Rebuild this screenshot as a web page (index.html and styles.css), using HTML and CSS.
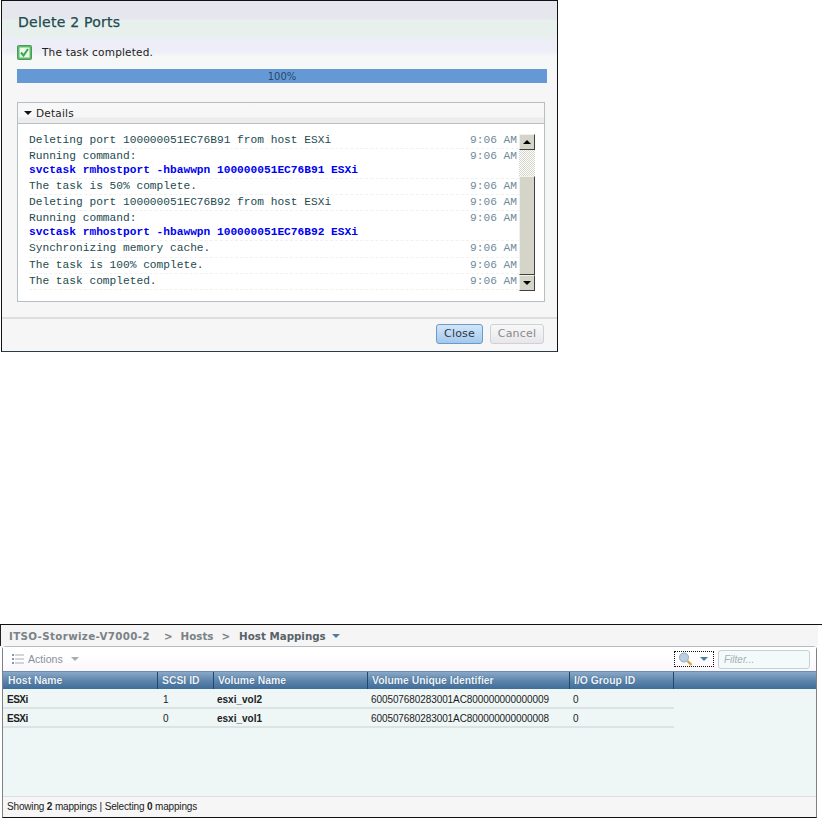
FILE: index.html
```html
<!DOCTYPE html>
<html lang="en">
<head>
<meta charset="utf-8">
<title>Delete 2 Ports</title>
<link rel="stylesheet" href="styles.css">
</head>
<body>
<section class="dialog">
  <h1 class="dialog-title">Delete 2 Ports</h1>
  <div class="status">
    <svg class="check" viewBox="0 0 15 15" width="15" height="15"><rect x=".5" y=".5" width="14" height="14" rx="1" fill="#5cbc68" stroke="#4a9a58"/><rect x="2.5" y="2.5" width="10" height="10" fill="#eef9ee"/><path d="M4 7.5l2.5 3L11 4" fill="none" stroke="#38ac48" stroke-width="2"/></svg>
    <span>The task completed.</span>
  </div>
  <div class="progress">100%</div>
  <div class="details">
    <div class="details-head"><span class="caret"></span>Details</div>
    <div class="details-body">
      <div class="log">
        <div class="row"><span>Deleting port 100000051EC76B91 from host ESXi</span><time>9:06 AM</time></div>
        <div class="row"><span>Running command:<b>svctask rmhostport -hbawwpn 100000051EC76B91 ESXi</b></span><time>9:06 AM</time></div>
        <div class="row"><span>The task is 50% complete.</span><time>9:06 AM</time></div>
        <div class="row"><span>Deleting port 100000051EC76B92 from host ESXi</span><time>9:06 AM</time></div>
        <div class="row"><span>Running command:<b>svctask rmhostport -hbawwpn 100000051EC76B92 ESXi</b></span><time>9:06 AM</time></div>
        <div class="row row-tall"><span>Synchronizing memory cache.</span><time>9:06 AM</time></div>
        <div class="row"><span>The task is 100% complete.</span><time>9:06 AM</time></div>
        <div class="row"><span>The task completed.</span><time>9:06 AM</time></div>
      </div>
      <div class="scrollbar">
        <div class="sb-btn"><span class="tri-up"></span></div>
        <div class="sb-track"></div>
        <div class="sb-thumb"></div>
        <div class="sb-btn"><span class="tri-down"></span></div>
      </div>
    </div>
  </div>
  <footer class="dialog-foot">
    <button class="btn btn-primary">Close</button>
    <button class="btn btn-disabled">Cancel</button>
  </footer>
</section>

<section class="mappings">
  <div class="crumbs">
    <span class="crumb-root">ITSO-Storwize-V7000-2</span><span class="crumb-sep">&gt;</span><span class="crumb-mid">Hosts</span><span class="crumb-sep crumb-sep2">&gt;</span><span class="crumb-cur">Host Mappings</span><span class="crumb-caret"></span>
  </div>
  <div class="panel">
    <div class="toolbar">
      <div class="actions">
        <svg viewBox="0 0 12 10" width="12" height="10"><path d="M0 0h2v2H0zM0 4h2v2H0zM0 8h2v2H0z" fill="#7f9ab0"/><path d="M3 1h9M3 5h9M3 9h9" stroke="#a4aeb6" stroke-width="1"/></svg>
        <span>Actions</span><span class="actions-caret"></span>
      </div>
      <div class="search">
        <svg viewBox="0 0 16 14" width="16" height="14"><circle cx="6" cy="5.5" r="4.5" fill="#b6cfe6" stroke="#9aa8b4"/><path d="M9.5 9l4 4" stroke="#d9a33c" stroke-width="2.4"/></svg>
        <span class="search-caret"></span>
      </div>
      <div class="filter">Filter...</div>
    </div>
    <div class="table">
      <div class="t-row t-head">
        <div>Host Name</div><div>SCSI ID</div><div>Volume Name</div><div>Volume Unique Identifier</div><div>I/O Group ID</div>
      </div>
      <div class="t-row t-data">
        <div class="strong">ESXi</div><div>1</div><div class="strong">esxi_vol2</div><div>600507680283001AC800000000000009</div><div>0</div>
      </div>
      <div class="t-row t-data">
        <div class="strong">ESXi</div><div>0</div><div class="strong">esxi_vol1</div><div>600507680283001AC800000000000008</div><div>0</div>
      </div>
    </div>
    <div class="panel-foot">Showing <b>2</b> mappings | Selecting <b>0</b> mappings</div>
  </div>
</section>
</body>
</html>
```
FILE: styles.css
```css
* { box-sizing: border-box; }
html, body { margin: 0; padding: 0; background: #fff; }
body { width: 822px; height: 818px; overflow: hidden; font-family: "Liberation Sans", Arial, sans-serif; }

.dialog {
  width: 557px; height: 352px; margin-left: 1px;
  border: 1px solid #111; border-bottom-color: #2c3a44;
  background: linear-gradient(#e6e6ee 0, #e6e6ee 17px, #e8f0ee 20px, #e8f0ee 34px, #eeeef8 40px, #eeeef8 50px, #f5f8f7 56px, #f6f6f6 80px);
  display: flex; flex-direction: column;
}
.dialog-title {
  margin: 0; padding: 13px 0 0 16px; height: 44px;
  font: 400 14px/17px "DejaVu Sans", sans-serif; letter-spacing: .25px; color: #234a50;
  -webkit-text-stroke: .25px #234a50;
}
.status { display: flex; align-items: center; gap: 10px; padding-left: 15px; height: 15px; font: 10.5px/15px "DejaVu Sans", sans-serif; letter-spacing: .2px; color: #222; }
.check { flex: none; }
.progress {
  margin: 9px 10px 0 15px; height: 14px; background: #6499d6;
  text-align: center; font: 10px/15px "DejaVu Sans", sans-serif; color: #27476b;
}
.details { margin: 19px 12px 0 15px; height: 200px; border: 1px solid #b6bec6; background: #fff; display: flex; flex-direction: column; }
.details-head {
  height: 21px; background: linear-gradient(#f8f8f8 0, #f6f6f6 14px, #ececec 15px, #ececec 100%);
  border-bottom: 1px solid #b6bec6;
  display: flex; align-items: center; padding: 0 0 1px 6px;
  font: 10.5px/14px "DejaVu Sans", sans-serif; letter-spacing: .2px; color: #222; gap: 4px;
}
.caret { width: 0; height: 0; border: 4px solid transparent; border-top: 4px solid #111; border-bottom: 0; }
.details-body { flex: 1; display: flex; align-items: flex-start; padding: 9px 10px 0 11px; }
.log { width: 490px; flex: none; font-family: "Liberation Mono", "Courier New", monospace; font-size: 11.2px; line-height: 15px; color: #244a50; }
.row { display: flex; justify-content: space-between; align-items: flex-start; border-bottom: 1px dashed #f0f2f2; }
.row-tall { padding-bottom: 1px; }
.row span { display: block; }
.row b { display: block; color: #0000f0; font-weight: 700; line-height: 14px; margin-top: -1px; padding-bottom: 1px; }
.row time { color: #70899a; padding-right: 2px; }
.scrollbar { width: 16px; flex: none; height: 157px; margin-top: 1px; display: flex; flex-direction: column; }
.sb-btn {
  height: 16px; flex: none; background: #d4d4c8;
  border: 1px solid; border-color: #f2f2ea #404040 #404040 #f2f2ea;
  display: flex; align-items: center; justify-content: center;
}
.tri-up { width: 0; height: 0; border: 4px solid transparent; border-bottom: 4px solid #000; border-top: 0; }
.tri-down { width: 0; height: 0; border: 4px solid transparent; border-top: 4px solid #000; border-bottom: 0; }
.sb-track { height: 26px; flex: none; background: repeating-conic-gradient(#d4d4c8 0 25%, #fff 0 50%) 0 0 / 2px 2px; }
.sb-thumb { flex: 1; background: #d4d4c8; border: 1px solid; border-color: #f2f2ea #404040 #404040 #f2f2ea; }
.dialog-foot {
  margin-top: 15px; flex: 1; border-top: 2px solid #dcdfe0; background: #f6f6f6;
  display: flex; justify-content: flex-end; align-items: flex-start; gap: 7px; padding: 5px 13px 0 0;
}
.btn { height: 20px; padding: 0; border-radius: 3px; font: 11px/16px "DejaVu Sans", sans-serif; letter-spacing: .2px; }
.btn-primary { width: 47px; background: linear-gradient(#d3e5f8, #a4c8ee); border: 1px solid #6a9cc8; color: #26384a; }
.btn-disabled { width: 54px; background: linear-gradient(#f8f8f8, #e8e6ea); border: 1px solid #cfd2d4; color: #8a8a8a; }

.mappings {
  margin-top: 272px; height: 194px; border-top: 1px solid #111;
  display: flex; flex-direction: column; position: relative;
}
.crumbs {
  width: 818px; height: 21px; background: #f5f5f5; border-left: 1px solid #222; padding-left: 8px;
  display: flex; align-items: center;
  font: 700 10.3px/14px "DejaVu Sans", sans-serif; color: #7a8288;
}
.crumb-root { letter-spacing: .35px; }
.crumb-sep { margin: 0 8px 0 14px; }
.crumb-sep2 { margin: 0 9px 0 8px; }
.crumb-mid { letter-spacing: 0; }
.crumb-cur { color: #5a6268; }
.crumb-caret { width: 0; height: 0; margin-left: 6px; border: 4px solid transparent; border-top: 4px solid #4a7ea0; border-bottom: 0; }
.panel {
  width: 815px; margin-left: 2px; flex: 1; border: 1px solid #7c8288; border-top-color: #b8bcc0; border-radius: 4px 4px 0 0;
  border-bottom: 1px solid #111; display: flex; flex-direction: column; background: #eef6f6;
}
.toolbar {
  height: 24px; flex: none; background: linear-gradient(#fff, #fff 8px, #fbf6fc); display: flex; align-items: center; padding: 0 6px 0 9px;
}
.actions { display: flex; align-items: center; gap: 4px; flex: 1; color: #8a9298; font-size: 10.6px; }
.actions-caret { width: 0; height: 0; margin-left: 4px; border: 4px solid transparent; border-top: 4px solid #a8acb0; border-bottom: 0; }
.search {
  width: 40px; height: 16px; border: 1px dotted #111; display: flex; align-items: center; justify-content: space-between; padding: 0 5px 0 3px; margin-right: 4px;
}
.search-caret { width: 0; height: 0; border: 4px solid transparent; border-top: 4px solid #4a7ea0; border-bottom: 0; }
.filter { width: 92px; height: 19px; border: 1px solid #c4d0d4; border-radius: 3px; background: #f2fafa; font: italic 10px/17px "Liberation Sans", sans-serif; color: #a8b0b4; padding-left: 5px; }
.table { flex: 1; }
.t-row { display: grid; grid-template-columns: 155px 56px 154px 202px 104px; width: 671px; font-size: 10px; }
.t-head {
  width: 100%; height: 18px; margin-bottom: 1px; background: linear-gradient(#8aa8c6, #5e86ae 50%, #3f6c98); color: #eef4fa; font-weight: 700; line-height: 17px; font-size: 10.4px;
  border-top: 1px solid #6a8eb0;
}
.t-head div { border-right: 1px solid #23486c; padding-left: 4px; text-shadow: 0 0 1px #24486c; }
.t-head div:first-child { padding-left: 5px; }
.t-data { height: 19px; line-height: 19px; border-bottom: 2px solid #dde2e2; color: #1c1c1c; }
.t-data div { padding-left: 3px; }
.t-data div:first-child { padding-left: 4px; letter-spacing: -.5px; }
.t-data div:nth-child(2) { padding-left: 5px; }
.t-data div:nth-child(4) { letter-spacing: -.09px; }
.strong { font-weight: 700; }
.panel-foot { height: 21px; flex: none; background: #f6f6f6; border-top: 1px solid #dcdfe0; font-size: 10px; letter-spacing: -.16px; line-height: 20px; padding-left: 4px; color: #222; }
```
